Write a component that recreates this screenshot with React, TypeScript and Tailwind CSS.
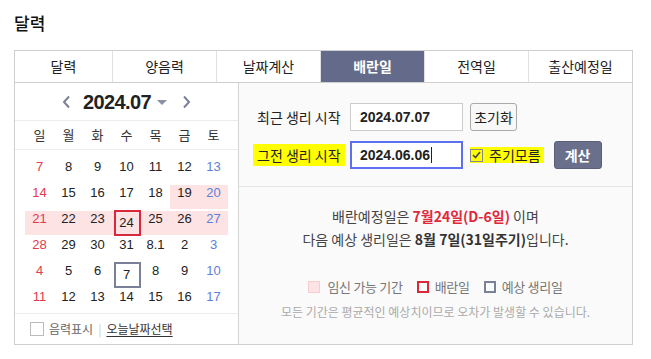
import React from "react";

const tabs = ["달력", "양음력", "날짜계산", "배란일", "전역일", "출산예정일"];
const weekdays = ["일", "월", "화", "수", "목", "금", "토"];

type Day = { label: string; pink?: boolean; mark?: "ovul" | "period" };

const weeks: Day[][] = [
    [{ label: "7" }, { label: "8" }, { label: "9" }, { label: "10" }, { label: "11" }, { label: "12" }, { label: "13" }],
    [{ label: "14" }, { label: "15" }, { label: "16" }, { label: "17" }, { label: "18" }, { label: "19", pink: true }, { label: "20", pink: true }],
    [{ label: "21", pink: true }, { label: "22", pink: true }, { label: "23", pink: true }, { label: "24", pink: true, mark: "ovul" }, { label: "25", pink: true }, { label: "26", pink: true }, { label: "27", pink: true }],
    [{ label: "28" }, { label: "29" }, { label: "30" }, { label: "31" }, { label: "8.1" }, { label: "2" }, { label: "3" }],
    [{ label: "4" }, { label: "5" }, { label: "6" }, { label: "7", mark: "period" }, { label: "8" }, { label: "9" }, { label: "10" }],
    [{ label: "11" }, { label: "12" }, { label: "13" }, { label: "14" }, { label: "15" }, { label: "16" }, { label: "17" }],
];

const dayColor = (i: number) => i === 0 ? "text-[#e23b4e]" : i === 6 ? "text-[#5d7fd8]" : "text-[#222]";

const Chevron = ({ dir }: { dir: "left" | "right" }) => (
    <svg width="9" height="14" viewBox="0 0 9 14">
        <path d={dir === "left" ? "M7 1.5 L2 7 L7 12.5" : "M2 1.5 L7 7 L2 12.5"} stroke="#7b8099" strokeWidth="2" fill="none" />
    </svg>
);

const Calendar = () => {
    return (
        <div className="w-[224px] border-r border-[#d5d5d5] flex flex-col">
            <div className="h-[38px] flex items-center justify-center border-b border-[#ececec]">
                <span className="mr-[12px]"><Chevron dir="left" /></span>
                <span className="text-[20px] font-bold text-[#222] tracking-[-0.6px] font-['Liberation_Sans',sans-serif]">2024.07</span>
                <span className="ml-[6px] mt-[2px] w-0 h-0 border-l-[5px] border-r-[5px] border-t-[5px] border-l-transparent border-r-transparent border-t-[#8a90a8]"></span>
                <span className="ml-[15px]"><Chevron dir="right" /></span>
            </div>
            <div className="h-[29px] grid grid-cols-7 px-[10px] border-b border-[#ececec] items-center">
                {weekdays.map(w => (
                    <span key={w} className="text-center text-[13px] text-[#333]">{w}</span>
                ))}
            </div>
            <div className="flex-1 flex flex-col gap-[2px] px-[10px] pt-[9px]">
                {weeks.map((week, r) => (
                    <div key={r} className="grid grid-cols-7 h-[24px]">
                        {week.map((d, i) => (
                            <div key={i} className={`relative flex justify-center ${d.pink ? "bg-[#fde3e4]" : ""}`}>
                                {d.mark && (
                                    <span className={`absolute left-[2px] right-0 -top-[1px] -bottom-[1px] border-2 ${d.mark === "ovul" ? "border-[#d8283a]" : "border-[#7b8099]"}`}></span>
                                )}
                                <span className={`text-[13px] leading-[14px] font-['Liberation_Sans',sans-serif] ${d.mark ? "pt-[5px]" : "pt-[1px]"} ${dayColor(i)}`}>{d.label}</span>
                            </div>
                        ))}
                    </div>
                ))}
            </div>
            <div className="h-[31px] border-t border-[#ececec] flex items-center pl-[15px]">
                <span className="w-[14px] h-[14px] border border-[#bbb] bg-white mr-[5px]"></span>
                <span className="text-[12px] text-[#666]">음력표시</span>
                <span className="text-[12px] text-[#ccc] mx-[5px]">|</span>
                <span className="text-[12px] text-[#333] underline underline-offset-2">오늘날짜선택</span>
            </div>
        </div>
    );
};

const Ovulation = () => {
    return (
        <div className="flex-1 bg-[#fafafa] flex flex-col">
            <div className="h-[104px] border-b border-[#e6e6e6] pl-[14px] pt-[20px] flex flex-col gap-[10px]">
                <div className="flex items-center h-[28px]">
                    <div className="w-[97px] pl-[4px] text-[14px] text-[#222]">최근 생리 시작</div>
                    <div className="w-[113px] h-[28px] border border-[#ccc] bg-white flex items-center pl-[9px] text-[14px] font-bold text-[#222] font-['Liberation_Sans',sans-serif]">2024.07.07</div>
                    <button className="ml-[7px] w-[47px] h-[28px] border border-[#aaa] rounded-[3px] bg-[#f8f8f8] text-[14px] text-[#222]">초기화</button>
                </div>
                <div className="flex items-center h-[28px]">
                    <div className="w-[97px] text-[14px] text-[#222]">
                        <span className="bg-[#ffff00] px-[4px] py-[1px]">그전 생리 시작</span>
                    </div>
                    <div className="w-[113px] h-[28px] border-2 border-[#5d70f0] bg-white flex items-center pl-[8px] text-[14px] font-bold text-[#222] font-['Liberation_Sans',sans-serif]">
                        2024.06.06<span className="w-[1px] h-[16px] bg-[#222] ml-[1px]"></span>
                    </div>
                    <span className="ml-[7px] bg-[#ffff00] flex items-center h-[16px] pr-[3px]">
                        <span className="w-[13px] h-[13px] border border-[#888] bg-[#ffff00] flex items-center justify-center mr-[6px]">
                            <svg width="9" height="8" viewBox="0 0 9 8"><path d="M1 4 L3.5 6.5 L8 1" stroke="#444" strokeWidth="1.6" fill="none" /></svg>
                        </span>
                        <span className="text-[14px] text-[#222]">주기모름</span>
                    </span>
                    <button className="ml-[10px] w-[48px] h-[28px] rounded-[3px] bg-[#6a6f8c] border border-[#5a5f7a] text-white text-[14px] font-bold">계산</button>
                </div>
            </div>
            <div className="flex-1 flex flex-col items-center pt-[18px]">
                <p className="text-[14px] text-[#444] leading-[23px]">
                    배란예정일은 <b className="text-[#e0293c]">7월24일(D-6일)</b> 이며
                </p>
                <p className="text-[14px] text-[#444] leading-[23px]">
                    다음 예상 생리일은 <b className="text-[#333]">8월 7일(31일주기)</b>입니다.
                </p>
                <div className="flex items-center gap-[14px] mt-[26px] text-[13px] text-[#777] tracking-[-0.3px]">
                    <span className="flex items-center">
                        <span className="w-[12px] h-[12px] bg-[#fde3e4] border border-[#f3cfd1] mr-[7px]"></span>임신 가능 기간
                    </span>
                    <span className="flex items-center">
                        <span className="w-[12px] h-[12px] border-2 border-[#d8283a] mr-[6px]"></span>배란일
                    </span>
                    <span className="flex items-center">
                        <span className="w-[12px] h-[12px] border-2 border-[#7b8099] mr-[6px]"></span>예상 생리일
                    </span>
                </div>
                <p className="mt-[6px] text-[12px] text-[#aaa]">모든 기간은 평균적인 예상치이므로 오차가 발생할 수 있습니다.</p>
            </div>
        </div>
    );
};

export default function App() {
    return (
        <div className="w-[651px] h-[359px] bg-white pl-[14px] font-['Malgun_Gothic','Noto_Sans_CJK_KR',sans-serif]">
            <h1 className="text-[17px] font-medium text-[#111] pt-[11px] h-[50px] leading-[24px]">달력</h1>
            <div className="w-[619px] h-[295px] border border-[#cfcfcf] flex flex-col">
                <div className="flex h-[32px] border-b border-[#cfcfcf]">
                    {tabs.map((t, i) => (
                        <div key={t} className={`flex items-center justify-center text-[14px] ${i > 0 ? "w-[104px] border-l border-[#e0e0e0]" : "flex-1"} ${t === "배란일" ? "bg-[#646b8a] text-white font-bold border-[#4f5570]" : "text-[#222]"}`}>{t}</div>
                    ))}
                </div>
                <div className="flex flex-1">
                    <Calendar />
                    <Ovulation />
                </div>
            </div>
        </div>
    );
}
